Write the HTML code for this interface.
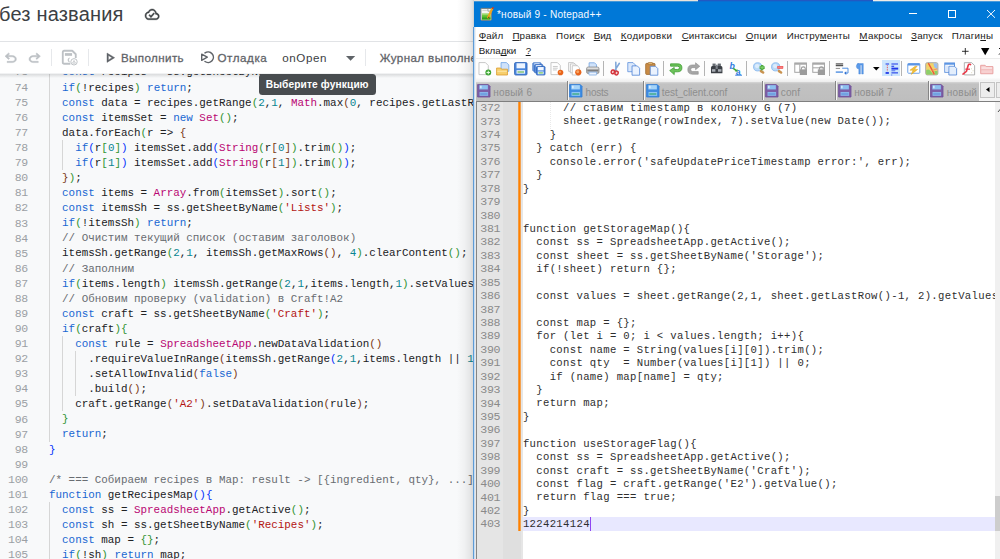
<!DOCTYPE html>
<html lang="ru"><head><meta charset="utf-8"><title>без названия</title>
<style>
html,body{margin:0;padding:0}
body{width:1000px;height:559px;overflow:hidden;position:relative;background:#fff;font-family:"Liberation Sans",sans-serif}
.t{position:absolute;white-space:pre}
.a{position:absolute}
svg{position:absolute;overflow:visible}
#gas{position:absolute;left:0;top:0;width:474px;height:559px;overflow:hidden;background:#fff}
#code{position:absolute;left:0;top:73.5px;width:474px;height:485.5px;background:#f8f9fa;overflow:hidden}
#code .ln{position:absolute;left:0;text-align:right;color:#9b9fa4;white-space:pre;font-family:"Liberation Mono",monospace}
#code .cl{position:absolute;white-space:pre;font-family:"Liberation Mono",monospace;color:#202124}
.k{color:#1967d2}.c{color:#b80672}.s{color:#b31412}.n{color:#098591}.m{color:#686c71}
.b1{color:#0431fa}.b2{color:#319331}.b3{color:#7b3814}
#npp{position:absolute;left:473px;top:0;width:527px;height:559px;overflow:hidden;background:#fff}
#npp .ln{position:absolute;white-space:pre;color:#8a8a8a;font-family:"Liberation Mono",monospace}
#npp .cl{position:absolute;white-space:pre;color:#2e2e2e;font-family:"Liberation Mono",monospace}
u{text-decoration-skip-ink:none;text-underline-offset:1px;text-decoration-thickness:1px}

</style></head>
<body>
<div id="gas">
<div class="t " style="left:-1.00px;top:0.77px;font-size:20px;line-height:26.0px;color:#3c4043;letter-spacing:0.189px;">без названия</div>
<svg style="left:144.50px;top:9.10px" width="14.30" height="10.73" viewBox="0 4 24 16" preserveAspectRatio="none"><path d="M19.35 10.04C18.67 6.59 15.64 4 12 4 9.11 4 6.6 5.64 5.35 8.04 2.34 8.36 0 10.91 0 14c0 3.31 2.69 6 6 6h13c2.76 0 5-2.24 5-5 0-2.64-2.05-4.78-4.65-4.96zM19 18H6c-2.21 0-4-1.79-4-4 0-2.05 1.53-3.76 3.56-3.97l1.07-.11.5-.95C8.08 7.14 9.94 6 12 6c2.62 0 4.88 1.86 5.39 4.43l.3 1.5 1.53.11c1.56.1 2.78 1.41 2.78 2.96 0 1.65-1.35 3-3 3zm-9-3.82l-2.09-2.09L6.5 13.5 10 17l6.01-6.01-1.41-1.41z" fill="#3c4043" stroke="#3c4043" stroke-width=".7"/></svg>
<div class="a" style="left:0;top:40.8px;width:474px;height:1px;background:#e1e3e6"></div>
<div class="a" style="left:0;top:73.4px;width:474px;height:2px;background:#f1f2f3"></div>
<div id="code" style="top:74.3px;height:484.7px">
<div class="a" style="left:49.30px;top:-24.86px;width:1px;height:392.08px;background:#d6d6d6"></div>
<div class="a" style="left:62.38px;top:65.62px;width:1px;height:30.16px;background:#d6d6d6"></div>
<div class="a" style="left:62.38px;top:261.66px;width:1px;height:75.40px;background:#d6d6d6"></div>
<div class="a" style="left:75.46px;top:276.74px;width:1px;height:45.24px;background:#d6d6d6"></div>
<div class="a" style="left:49.30px;top:427.54px;width:1px;height:90.48px;background:#d6d6d6"></div>
<div class="ln" style="top:-10.38px;width:27.7px;font-size:11.5px;line-height:15.08px;letter-spacing:-.38px">73</div>
<div class="cl" style="left:49.0px;top:-9.58px;font-size:10.9px;line-height:15.08px">  <span class="k">const</span> recipes = ss.getSheetByName<span class="b2">(</span><span class="s">'Recipes'</span><span class="b2">)</span>;</div>
<div class="ln" style="top:5.50px;width:27.7px;font-size:11.5px;line-height:15.08px;letter-spacing:-.38px">74</div>
<div class="cl" style="left:49.0px;top:6.30px;font-size:10.9px;line-height:15.08px">  <span class="k">if</span><span class="b2">(</span>!recipes<span class="b2">)</span> <span class="k">return</span>;</div>
<div class="ln" style="top:20.58px;width:27.7px;font-size:11.5px;line-height:15.08px;letter-spacing:-.38px">75</div>
<div class="cl" style="left:49.0px;top:21.38px;font-size:10.9px;line-height:15.08px">  <span class="k">const</span> data = recipes.getRange<span class="b2">(</span><span class="n">2</span>,<span class="n">1</span>, <span class="c">Math</span>.max<span class="b3">(</span><span class="n">0</span>, recipes.getLastR</div>
<div class="ln" style="top:35.66px;width:27.7px;font-size:11.5px;line-height:15.08px;letter-spacing:-.38px">76</div>
<div class="cl" style="left:49.0px;top:36.46px;font-size:10.9px;line-height:15.08px">  <span class="k">const</span> itemsSet = <span class="k">new</span> <span class="c">Set</span><span class="b2">(</span><span class="b2">)</span>;</div>
<div class="ln" style="top:50.74px;width:27.7px;font-size:11.5px;line-height:15.08px;letter-spacing:-.38px">77</div>
<div class="cl" style="left:49.0px;top:51.54px;font-size:10.9px;line-height:15.08px">  data.forEach<span class="b2">(</span>r =&gt; <span class="b3">{</span></div>
<div class="ln" style="top:65.82px;width:27.7px;font-size:11.5px;line-height:15.08px;letter-spacing:-.38px">78</div>
<div class="cl" style="left:49.0px;top:66.62px;font-size:10.9px;line-height:15.08px">    <span class="k">if</span><span class="b1">(</span>r<span class="b2">[</span><span class="n">0</span><span class="b2">]</span><span class="b1">)</span> itemsSet.add<span class="b1">(</span><span class="c">String</span><span class="b2">(</span>r<span class="b3">[</span><span class="n">0</span><span class="b3">]</span><span class="b2">)</span>.trim<span class="b2">(</span><span class="b2">)</span><span class="b1">)</span>;</div>
<div class="ln" style="top:80.90px;width:27.7px;font-size:11.5px;line-height:15.08px;letter-spacing:-.38px">79</div>
<div class="cl" style="left:49.0px;top:81.70px;font-size:10.9px;line-height:15.08px">    <span class="k">if</span><span class="b1">(</span>r<span class="b2">[</span><span class="n">1</span><span class="b2">]</span><span class="b1">)</span> itemsSet.add<span class="b1">(</span><span class="c">String</span><span class="b2">(</span>r<span class="b3">[</span><span class="n">1</span><span class="b3">]</span><span class="b2">)</span>.trim<span class="b2">(</span><span class="b2">)</span><span class="b1">)</span>;</div>
<div class="ln" style="top:95.98px;width:27.7px;font-size:11.5px;line-height:15.08px;letter-spacing:-.38px">80</div>
<div class="cl" style="left:49.0px;top:96.78px;font-size:10.9px;line-height:15.08px">  <span class="b3">}</span><span class="b2">)</span>;</div>
<div class="ln" style="top:111.06px;width:27.7px;font-size:11.5px;line-height:15.08px;letter-spacing:-.38px">81</div>
<div class="cl" style="left:49.0px;top:111.86px;font-size:10.9px;line-height:15.08px">  <span class="k">const</span> items = <span class="c">Array</span>.from<span class="b2">(</span>itemsSet<span class="b2">)</span>.sort<span class="b2">(</span><span class="b2">)</span>;</div>
<div class="ln" style="top:126.14px;width:27.7px;font-size:11.5px;line-height:15.08px;letter-spacing:-.38px">82</div>
<div class="cl" style="left:49.0px;top:126.94px;font-size:10.9px;line-height:15.08px">  <span class="k">const</span> itemsSh = ss.getSheetByName<span class="b2">(</span><span class="s">'Lists'</span><span class="b2">)</span>;</div>
<div class="ln" style="top:141.22px;width:27.7px;font-size:11.5px;line-height:15.08px;letter-spacing:-.38px">83</div>
<div class="cl" style="left:49.0px;top:142.02px;font-size:10.9px;line-height:15.08px">  <span class="k">if</span><span class="b2">(</span>!itemsSh<span class="b2">)</span> <span class="k">return</span>;</div>
<div class="ln" style="top:156.30px;width:27.7px;font-size:11.5px;line-height:15.08px;letter-spacing:-.38px">84</div>
<div class="cl" style="left:49.0px;top:157.10px;font-size:10.9px;line-height:15.08px">  <span class="m">// Очистим текущий список (оставим заголовок)</span></div>
<div class="ln" style="top:171.38px;width:27.7px;font-size:11.5px;line-height:15.08px;letter-spacing:-.38px">85</div>
<div class="cl" style="left:49.0px;top:172.18px;font-size:10.9px;line-height:15.08px">  itemsSh.getRange<span class="b2">(</span><span class="n">2</span>,<span class="n">1</span>, itemsSh.getMaxRows<span class="b3">(</span><span class="b3">)</span>, <span class="n">4</span><span class="b2">)</span>.clearContent<span class="b2">(</span><span class="b2">)</span>;</div>
<div class="ln" style="top:186.46px;width:27.7px;font-size:11.5px;line-height:15.08px;letter-spacing:-.38px">86</div>
<div class="cl" style="left:49.0px;top:187.26px;font-size:10.9px;line-height:15.08px">  <span class="m">// Заполним</span></div>
<div class="ln" style="top:201.54px;width:27.7px;font-size:11.5px;line-height:15.08px;letter-spacing:-.38px">87</div>
<div class="cl" style="left:49.0px;top:202.34px;font-size:10.9px;line-height:15.08px">  <span class="k">if</span><span class="b2">(</span>items.length<span class="b2">)</span> itemsSh.getRange<span class="b2">(</span><span class="n">2</span>,<span class="n">1</span>,items.length,<span class="n">1</span><span class="b2">)</span>.setValues</div>
<div class="ln" style="top:216.62px;width:27.7px;font-size:11.5px;line-height:15.08px;letter-spacing:-.38px">88</div>
<div class="cl" style="left:49.0px;top:217.42px;font-size:10.9px;line-height:15.08px">  <span class="m">// Обновим проверку (validation) в Craft!A2</span></div>
<div class="ln" style="top:231.70px;width:27.7px;font-size:11.5px;line-height:15.08px;letter-spacing:-.38px">89</div>
<div class="cl" style="left:49.0px;top:232.50px;font-size:10.9px;line-height:15.08px">  <span class="k">const</span> craft = ss.getSheetByName<span class="b2">(</span><span class="s">'Craft'</span><span class="b2">)</span>;</div>
<div class="ln" style="top:246.78px;width:27.7px;font-size:11.5px;line-height:15.08px;letter-spacing:-.38px">90</div>
<div class="cl" style="left:49.0px;top:247.58px;font-size:10.9px;line-height:15.08px">  <span class="k">if</span><span class="b2">(</span>craft<span class="b2">)</span><span class="b2">{</span></div>
<div class="ln" style="top:261.86px;width:27.7px;font-size:11.5px;line-height:15.08px;letter-spacing:-.38px">91</div>
<div class="cl" style="left:49.0px;top:262.66px;font-size:10.9px;line-height:15.08px">    <span class="k">const</span> rule = <span class="c">SpreadsheetApp</span>.newDataValidation<span class="b3">(</span><span class="b3">)</span></div>
<div class="ln" style="top:276.94px;width:27.7px;font-size:11.5px;line-height:15.08px;letter-spacing:-.38px">92</div>
<div class="cl" style="left:49.0px;top:277.74px;font-size:10.9px;line-height:15.08px">      .requireValueInRange<span class="b3">(</span>itemsSh.getRange<span class="b1">(</span><span class="n">2</span>,<span class="n">1</span>,items.length || <span class="n">1</span></div>
<div class="ln" style="top:292.02px;width:27.7px;font-size:11.5px;line-height:15.08px;letter-spacing:-.38px">93</div>
<div class="cl" style="left:49.0px;top:292.82px;font-size:10.9px;line-height:15.08px">      .setAllowInvalid<span class="b3">(</span><span class="k">false</span><span class="b3">)</span></div>
<div class="ln" style="top:307.10px;width:27.7px;font-size:11.5px;line-height:15.08px;letter-spacing:-.38px">94</div>
<div class="cl" style="left:49.0px;top:307.90px;font-size:10.9px;line-height:15.08px">      .build<span class="b3">(</span><span class="b3">)</span>;</div>
<div class="ln" style="top:322.18px;width:27.7px;font-size:11.5px;line-height:15.08px;letter-spacing:-.38px">95</div>
<div class="cl" style="left:49.0px;top:322.98px;font-size:10.9px;line-height:15.08px">    craft.getRange<span class="b3">(</span><span class="s">'A2'</span><span class="b3">)</span>.setDataValidation<span class="b3">(</span>rule<span class="b3">)</span>;</div>
<div class="ln" style="top:337.26px;width:27.7px;font-size:11.5px;line-height:15.08px;letter-spacing:-.38px">96</div>
<div class="cl" style="left:49.0px;top:338.06px;font-size:10.9px;line-height:15.08px">  <span class="b2">}</span></div>
<div class="ln" style="top:352.34px;width:27.7px;font-size:11.5px;line-height:15.08px;letter-spacing:-.38px">97</div>
<div class="cl" style="left:49.0px;top:353.14px;font-size:10.9px;line-height:15.08px">  <span class="k">return</span>;</div>
<div class="ln" style="top:367.42px;width:27.7px;font-size:11.5px;line-height:15.08px;letter-spacing:-.38px">98</div>
<div class="cl" style="left:49.0px;top:368.22px;font-size:10.9px;line-height:15.08px"><span class="b1">}</span></div>
<div class="ln" style="top:382.50px;width:27.7px;font-size:11.5px;line-height:15.08px;letter-spacing:-.38px">99</div>
<div class="ln" style="top:397.58px;width:27.7px;font-size:11.5px;line-height:15.08px;letter-spacing:-.38px">100</div>
<div class="cl" style="left:49.0px;top:398.38px;font-size:10.9px;line-height:15.08px"><span class="m">/* === Собираем recipes в Map: result -&gt; [{ingredient, qty}, ...]</span></div>
<div class="ln" style="top:412.66px;width:27.7px;font-size:11.5px;line-height:15.08px;letter-spacing:-.38px">101</div>
<div class="cl" style="left:49.0px;top:413.46px;font-size:10.9px;line-height:15.08px"><span class="k">function</span> getRecipesMap<span class="b1">(</span><span class="b1">)</span><span class="b1">{</span></div>
<div class="ln" style="top:427.74px;width:27.7px;font-size:11.5px;line-height:15.08px;letter-spacing:-.38px">102</div>
<div class="cl" style="left:49.0px;top:428.54px;font-size:10.9px;line-height:15.08px">  <span class="k">const</span> ss = <span class="c">SpreadsheetApp</span>.getActive<span class="b2">(</span><span class="b2">)</span>;</div>
<div class="ln" style="top:442.82px;width:27.7px;font-size:11.5px;line-height:15.08px;letter-spacing:-.38px">103</div>
<div class="cl" style="left:49.0px;top:443.62px;font-size:10.9px;line-height:15.08px">  <span class="k">const</span> sh = ss.getSheetByName<span class="b2">(</span><span class="s">'Recipes'</span><span class="b2">)</span>;</div>
<div class="ln" style="top:457.90px;width:27.7px;font-size:11.5px;line-height:15.08px;letter-spacing:-.38px">104</div>
<div class="cl" style="left:49.0px;top:458.70px;font-size:10.9px;line-height:15.08px">  <span class="k">const</span> map = <span class="b2">{</span><span class="b2">}</span>;</div>
<div class="ln" style="top:472.98px;width:27.7px;font-size:11.5px;line-height:15.08px;letter-spacing:-.38px">105</div>
<div class="cl" style="left:49.0px;top:473.78px;font-size:10.9px;line-height:15.08px">  <span class="k">if</span><span class="b2">(</span>!sh<span class="b2">)</span> <span class="k">return</span> map;</div>
<div class="a" style="left:0;top:0;width:474px;height:4px;background:linear-gradient(rgba(60,64,67,.16),rgba(60,64,67,0))"></div>
<div class="a" style="left:258.6px;top:0.0px;width:117.4px;height:20.5px;background:#484c4f;border-radius:3.5px"></div>
</div>
<div class="t " style="left:265.70px;top:78.13px;font-size:10.2px;line-height:13.26px;color:#fff;letter-spacing:0.130px;font-weight:bold;">Выберите функцию</div>
<svg style="left:5.40px;top:52.60px" width="11.40" height="9.60" viewBox="4 4 16 15" preserveAspectRatio="none"><path d="M7 19v-2h7.1q1.575 0 2.737-1Q18 15 18 13.5T16.838 11Q15.675 10 14.1 10H7.8l2.6 2.6L9 14 4 9l5-5 1.4 1.4L7.8 8h6.3q2.425 0 4.163 1.575Q20 11.15 20 13.5q0 2.35-1.737 3.925Q16.525 19 14.1 19Z" fill="#bcc0c4" stroke="#bcc0c4" stroke-width=".7"/></svg>
<svg style="left:28.80px;top:52.60px" width="11.40" height="9.60" viewBox="4 4 16 15" preserveAspectRatio="none"><path d="M9.9 19q-2.425 0-4.163-1.575Q4 15.850 4 13.5q0-2.35 1.737-3.925Q7.475 8 9.9 8h6.3l-2.6-2.6L15 4l5 5-5 5-1.4-1.4 2.6-2.6H9.9q-1.575 0-2.737 1Q6 12 6 13.5T7.163 16q1.162 1 2.737 1H17v2Z" fill="#bcc0c4" stroke="#bcc0c4" stroke-width=".7"/></svg>
<div class="a" style="left:51px;top:49px;width:1px;height:16.5px;background:#e6e8eb"></div>
<svg style="left:61.80px;top:50.00px" width="15.50" height="15.50" viewBox="0 0 16 16" ><path d="M2.2 0.8H10.6L14.2 4.4V8.2M8.6 14.2H2.2Q0.8 14.2 0.8 12.8V2.2Q0.8 0.8 2.2 0.8" fill="none" stroke="#bdc1c5" stroke-width="1.9" stroke-linejoin="round"/><rect x="3" y="3.2" width="7.4" height="2.8" fill="#bdc1c5"/><path d="M7.6 8.2A2.3 2.3 0 0 0 7.6 12.4A3 3 0 0 1 7.6 8.2Z" fill="#bdc1c5" stroke="#bdc1c5" stroke-width=".8"/><circle cx="12.4" cy="12.2" r="3.3" fill="#fff" stroke="#bdc1c5" stroke-width="1"/><path d="M10.9 13.6L12.4 10.8L13.9 13.6Z" fill="none" stroke="#bdc1c5" stroke-width=".8"/></svg>
<div class="a" style="left:87.6px;top:49px;width:1px;height:16.5px;background:#e6e8eb"></div>
<svg style="left:107.00px;top:53.00px" width="7.70" height="9.40" viewBox="8 5 11 14" preserveAspectRatio="none"><path d="M8 19V5l11 7Zm2-7Zm0 3.35L15.25 12 10 8.65Z" fill="#5f6368" stroke="#5f6368" stroke-width=".6"/></svg>
<div class="t " style="left:121.00px;top:50.44px;font-size:11.6px;line-height:15.08px;color:#5f6368;letter-spacing:0.385px;-webkit-text-stroke:.28px #5f6368;">Выполнить</div>
<svg style="left:200.70px;top:51.30px" width="12.40" height="12.40" viewBox="0 0 12.4 12.4" ><path d="M4.0 1.9A5.3 5.3 0 1 1 4.0 10.5" fill="none" stroke="#5f6368" stroke-width="1.5" stroke-linecap="round"/><path d="M0.7 3.1L6.3 6.2L0.7 9.3Z" fill="none" stroke="#5f6368" stroke-width="1.4" stroke-linejoin="round"/></svg>
<div class="t " style="left:217.50px;top:50.44px;font-size:11.6px;line-height:15.08px;color:#5f6368;letter-spacing:0.567px;-webkit-text-stroke:.28px #5f6368;">Отладка</div>
<div class="t " style="left:282.20px;top:50.44px;font-size:11.6px;line-height:15.08px;color:#3c4043;letter-spacing:0.622px;">onOpen</div>
<svg style="left:345.7px;top:55.6px" width="9.2" height="4.8" viewBox="0 0 10 5"><path d="M0 0H10L5 5Z" fill="#5f6368"/></svg>
<div class="a" style="left:365.4px;top:49px;width:1px;height:16.5px;background:#e6e8eb"></div>
<div class="t " style="left:379.80px;top:50.44px;font-size:11.6px;line-height:15.08px;color:#5f6368;letter-spacing:0.396px;-webkit-text-stroke:.28px #5f6368;">Журнал выполнения</div>
</div>
<div id="npp" style="left:0;width:1000px;background:none;pointer-events:none">
<div class="a" style="left:473.5px;top:1.3px;width:526.5px;height:558px;background:#fff"></div>
<div class="a" style="left:473.5px;top:1.3px;width:526.5px;height:25.4px;background:#0078d7"></div>
<div class="a" style="left:473.5px;top:0px;width:224.5px;height:1px;background:#e9e3db;opacity:1"></div>
<div class="a" style="left:698px;top:0px;width:174.5px;height:1px;background:#2259c2;opacity:1"></div>
<div class="a" style="left:872.5px;top:0px;width:127.5px;height:1px;background:#f0ece7;opacity:1"></div>
<div class="a" style="left:473.5px;top:1px;width:224.5px;height:1px;background:#e9e3db;opacity:0.3"></div>
<div class="a" style="left:698px;top:1px;width:174.5px;height:1px;background:#2259c2;opacity:0.3"></div>
<div class="a" style="left:872.5px;top:1px;width:127.5px;height:1px;background:#f0ece7;opacity:0.3"></div>
<svg style="left:479.60px;top:7.00px" width="13.80" height="13.80" viewBox="0 0 14 14" ><rect x=".9" y="1.4" width="10.6" height="12" rx=".5" fill="#f4f4f0" stroke="#7d7d78" stroke-width="1"/><path d="M2 12.6V6.4h8.6v6.2z" fill="#9ad86a"/><path d="M2 12.6V8.4h8.6v4.2z" fill="#5cc030"/><path d="M2 12.6V10.6h8.6v2z" fill="#2f9e1c"/><path d="M2.4 3.4h4.6" stroke="#c9c9c4" stroke-width=".9"/><path d="M8 1.6v2.6h3" fill="none" stroke="#8a8a84" stroke-width=".8"/><path d="M12.4 1.8L8.2 10.6" stroke="#f0a41c" stroke-width="2.2" stroke-linecap="round"/><path d="M8.6 9.6L7.6 12L9.6 10.6Z" fill="#6b4a1e"/><circle cx="13" cy="1" r="1" fill="#c0392b"/></svg>
<div class="t " style="left:497.00px;top:8.33px;font-size:10.1px;line-height:13.13px;color:#f4f9ff;letter-spacing:0.194px;">*новый 9 - Notepad++</div>
<div class="a" style="left:909px;top:13px;width:8.4px;height:1px;background:#fff"></div>
<div class="a" style="left:947.6px;top:10.2px;width:6.3px;height:5.8px;border:1px solid #fff;box-sizing:content-box"></div>
<svg style="left:987.2px;top:10.1px" width="8" height="7.8" viewBox="0 0 10 10" preserveAspectRatio="none"><path d="M0 0L10 10M10 0L0 10" stroke="#fff" stroke-width="1.2"/></svg>
<div class="t " style="left:478.70px;top:29.53px;font-size:9.8px;line-height:12.74px;color:#1a1a1a;letter-spacing:0.127px;"><u>Ф</u>айл</div>
<div class="t " style="left:512.40px;top:29.53px;font-size:9.8px;line-height:12.74px;color:#1a1a1a;letter-spacing:0.134px;"><u>П</u>равка</div>
<div class="t " style="left:556.10px;top:29.53px;font-size:9.8px;line-height:12.74px;color:#1a1a1a;letter-spacing:0.349px;">Пои<u>с</u>к</div>
<div class="t " style="left:593.70px;top:29.53px;font-size:9.8px;line-height:12.74px;color:#1a1a1a;letter-spacing:-0.045px;"><u>В</u>ид</div>
<div class="t " style="left:620.70px;top:29.53px;font-size:9.8px;line-height:12.74px;color:#1a1a1a;letter-spacing:0.400px;"><u>К</u>одировки</div>
<div class="t " style="left:681.70px;top:29.53px;font-size:9.8px;line-height:12.74px;color:#1a1a1a;letter-spacing:0.080px;"><u>С</u>интаксисы</div>
<div class="t " style="left:745.70px;top:29.53px;font-size:9.8px;line-height:12.74px;color:#1a1a1a;letter-spacing:0.423px;"><u>О</u>пции</div>
<div class="t " style="left:786.70px;top:29.53px;font-size:9.8px;line-height:12.74px;color:#1a1a1a;letter-spacing:0.191px;">Инстру<u>м</u>енты</div>
<div class="t " style="left:859.30px;top:29.53px;font-size:9.8px;line-height:12.74px;color:#1a1a1a;letter-spacing:0.308px;"><u>М</u>акросы</div>
<div class="t " style="left:911.10px;top:29.53px;font-size:9.8px;line-height:12.74px;color:#1a1a1a;letter-spacing:0.174px;"><u>З</u>апуск</div>
<div class="t " style="left:951.70px;top:29.53px;font-size:9.8px;line-height:12.74px;color:#1a1a1a;letter-spacing:0.269px;">Плаги<u>н</u>ы</div>
<div class="t " style="left:478.70px;top:45.23px;font-size:9.8px;line-height:12.74px;color:#1a1a1a;letter-spacing:0.003px;">Вкла<u>д</u>ки</div>
<div class="t " style="left:525.70px;top:45.23px;font-size:9.8px;line-height:12.74px;color:#1a1a1a;letter-spacing:-0.453px;"><u>?</u></div>
<svg style="left:962.3px;top:48px" width="6.6" height="6.6" viewBox="0 0 10 10"><path d="M5 0V10M0 5H10" stroke="#111" stroke-width="1.3"/></svg>
<svg style="left:980.6px;top:47.6px" width="8.4" height="7.2" viewBox="0 0 10 10" preserveAspectRatio="none"><path d="M0 0H10L5 10Z" fill="#000"/></svg>
<svg style="left:998.8px;top:48px" width="6.6" height="6.6" viewBox="0 0 10 10"><path d="M0 0L10 10M10 0L0 10" stroke="#111" stroke-width="1.5"/></svg>
<div class="a" style="left:474.5px;top:58.4px;width:526px;height:1px;background:#ececec"></div>
<div class="a" style="left:474.5px;top:59.4px;width:526px;height:19.4px;background:#fdfdfd"></div>
<div class="a" style="left:474.5px;top:78.4px;width:526px;height:3.8px;background:linear-gradient(#fbfbfb,#ececec)"></div>
<div class="a" style="left:882px;top:59.6px;width:18.2px;height:16.6px;background:#cde6fd;border:0"></div>
<svg style="left:478.00px;top:61.70px" width="13.60" height="13.60" viewBox="0 0 14 14" ><path d="M1 0.6h6.6l3 3v9.4h-9.6z" fill="#fff" stroke="#b9b9b9" stroke-width="0.8" stroke-linejoin="round"/><circle cx="10.6" cy="10.8" r="3" fill="#3fa535"/><path d="M10.6 9v3.6M8.8 10.8h3.6" stroke="#e6ffe0" stroke-width="1"/></svg>
<svg style="left:495.50px;top:61.70px" width="13.60" height="13.60" viewBox="0 0 14 14" ><path d="M5.2 0.6h5.6l2.4 2.4v6.6h-8z" fill="#cfe2fa" stroke="#6aa0e4" stroke-width="0.8" stroke-linejoin="round"/><path d="M.6 6.2h4.2l1 1.2h6v6H.6z" fill="#f7cf6d" stroke="#d99a2b" stroke-width=".8" stroke-linejoin="round"/><path d="M1.4 9h9.8v1.2H1.4z" fill="#fbe3a0"/></svg>
<svg style="left:513.60px;top:61.70px" width="13.60" height="13.60" viewBox="0 0 14 14" ><rect x=".6" y=".6" width="12.8" height="12.8" rx="1.2" fill="#4a86dc" stroke="#2f64b8" stroke-width=".9"/><rect x="2.6" y="1.3" width="8.8" height="5.2" fill="#eef5ff"/><rect x="2.6" y="8.4" width="8.8" height="3.6" fill="#eef5ff"/><rect x="3.6" y="9.5" width="6.8" height="1.6" fill="#86c57a"/></svg>
<svg style="left:531.80px;top:61.70px" width="13.60" height="13.60" viewBox="0 0 14 14" ><rect x=".8" y=".8" width="8.6" height="8.6" rx=".8" fill="#6f9fe2" stroke="#3f72c4" stroke-width=".8"/><rect x="2.4" y="1.4" width="5.4" height="2.4" fill="#eef5ff"/><rect x="2.6" y="2.6" width="8.6" height="8.6" rx=".8" fill="#5f93dc" stroke="#3a6cc0" stroke-width=".8"/><rect x="4.2" y="3.2" width="5.4" height="2.4" fill="#eef5ff"/><rect x="4.6" y="4.6" width="8.8" height="8.8" rx=".8" fill="#4a86dc" stroke="#2f64b8" stroke-width=".8"/><rect x="6" y="5.2" width="6" height="3.4" fill="#f2f7ff"/><rect x="6" y="9.8" width="6" height="2.8" fill="#eef5ff"/><rect x="6.8" y="10.4" width="4.4" height="1.6" fill="#8fd07e"/></svg>
<svg style="left:549.80px;top:61.70px" width="13.60" height="13.60" viewBox="0 0 14 14" ><path d="M1 0.6h6.6l3 3v9.4h-9.6z" fill="#fff" stroke="#b9b9b9" stroke-width="0.8" stroke-linejoin="round"/><path d="M3 4.6h5M3 6.4h5M3 8.2h4" stroke="#c8c8c8" stroke-width="1"/><circle cx="10.8" cy="10.8" r="2.9" fill="#e8641b"/><circle cx="10.3" cy="10.2" r="1.2" fill="#f59a55"/></svg>
<svg style="left:568.20px;top:61.70px" width="13.60" height="13.60" viewBox="0 0 14 14" ><path d="M0.6 0.6h5.0l2.2 2.2v6.8h-7.2z" fill="#fff" stroke="#b9b9b9" stroke-width="0.8" stroke-linejoin="round"/><path d="M2.4 2h5.0l2.2 2.2v6.999999999999999h-7.2z" fill="#fff" stroke="#b9b9b9" stroke-width="0.8" stroke-linejoin="round"/><path d="M4.4 3.8h5.2l2.2 2.2v7.3999999999999995h-7.4z" fill="#fff" stroke="#b9b9b9" stroke-width="0.8" stroke-linejoin="round"/><circle cx="10.6" cy="10.6" r="3.2" fill="#e8641b"/><circle cx="10" cy="10" r="1.5" fill="#f6a565"/></svg>
<svg style="left:586.20px;top:61.70px" width="13.60" height="13.60" viewBox="0 0 14 14" ><path d="M3.2 6V.8h5.6l2 2V6z" fill="#cfe2fa" stroke="#6fa0e0" stroke-width=".8"/><rect x=".6" y="5.2" width="12.8" height="6.6" rx="1.6" fill="#b9b9b9" stroke="#858585" stroke-width=".8"/><path d="M1.4 6.4h11.2" stroke="#e6e6e6" stroke-width="1.2"/><rect x="1.4" y="8" width="11.2" height="1.6" fill="#7d7d7d"/><path d="M3 10.4h8v2.4q0 .6-.6.6H3.6q-.6 0-.6-.6z" fill="#eaf2fd" stroke="#7aa7e0" stroke-width=".8"/></svg>
<svg style="left:609.20px;top:61.70px" width="13.60" height="13.60" viewBox="0 0 14 14" ><g transform="rotate(14 7 7)"><path d="M5.4 .6L7.6 8.6M9.2 .6L6.6 8.6" stroke="#7fa6d8" stroke-width="1.6" stroke-linecap="round"/><ellipse cx="4.8" cy="10.8" rx="1.7" ry="2" fill="#f3d0d0" stroke="#d4333a" stroke-width="1.5"/><ellipse cx="8.8" cy="11" rx="1.7" ry="2" fill="#f3d0d0" stroke="#d4333a" stroke-width="1.5"/></g></svg>
<svg style="left:627.20px;top:61.70px" width="13.60" height="13.60" viewBox="0 0 14 14" ><path d="M0.8 0.6h5.4l2.4 2.4v7.0h-7.8z" fill="#dbe8fb" stroke="#5b8fdb" stroke-width="0.8" stroke-linejoin="round"/><path d="M5.2 4h5.4l2.4 2.4v7.199999999999999h-7.8z" fill="#eaf2fe" stroke="#4a80d4" stroke-width="0.8" stroke-linejoin="round"/></svg>
<svg style="left:645.30px;top:61.70px" width="13.60" height="13.60" viewBox="0 0 14 14" ><rect x=".7" y="1.4" width="9.6" height="11.4" rx="1" fill="#c98b45" stroke="#9c6a2e" stroke-width=".8"/><rect x="3.2" y=".5" width="4.6" height="2.2" rx=".6" fill="#e1b36f" stroke="#9c6a2e" stroke-width=".6"/><path d="M5.4 4.4h5.4l2.4 2.4v6.799999999999999h-7.8z" fill="#eaf2fe" stroke="#4a80d4" stroke-width="0.8" stroke-linejoin="round"/></svg>
<svg style="left:669.00px;top:61.70px" width="13.60" height="13.60" viewBox="0 0 14 14" ><path d="M1.6 1.9H9Q13.3 1.9 13.3 6T9 10.1H5.4V13L.7 8.8L5.4 5.6V7.7H8.8Q10.8 7.7 10.8 6T8.8 4.3H1.6Z" fill="#6cc35a" stroke="#3c9a30" stroke-width=".8" stroke-linejoin="round"/></svg>
<svg style="left:687.00px;top:61.70px" width="13.60" height="13.60" viewBox="0 0 14 14" ><path d="M8.8 .8L13.2 4.4L8.8 8V5.8H5.8Q3.8 5.8 3.8 7.8T5.8 9.8H11.6V12.6H5.6Q.8 12.4 .8 7.8T5.6 3H8.8Z" fill="#a6a6a6" stroke="#8e8e8e" stroke-width=".6" stroke-linejoin="round"/></svg>
<svg style="left:710.20px;top:61.70px" width="13.60" height="13.60" viewBox="0 0 14 14" ><rect x="2.6" y="1.6" width="3.2" height="3.4" fill="#666b72"/><rect x="8" y="1.6" width="3.2" height="3.4" fill="#666b72"/><path d="M1 5.8Q1 4.2 2.4 4.2H11.4Q12.8 4.2 12.8 5.8V11.6H1Z" fill="#3b3f45"/><rect x="5.8" y="2.8" width="2.2" height="4.4" fill="#7b8088"/><rect x="2" y="7.4" width="3.6" height="2.6" fill="#a9aeb6"/><rect x="8.2" y="7.4" width="3.6" height="2.6" fill="#a9aeb6"/></svg>
<svg style="left:728.80px;top:61.70px" width="13.60" height="13.60" viewBox="0 0 14 14" ><text x=".4" y="6.8" font-family="Liberation Sans,sans-serif" font-size="9" font-weight="bold" font-style="italic" fill="#2f7be0">b</text><text x="7" y="13.4" font-family="Liberation Sans,sans-serif" font-size="9" font-weight="bold" fill="#2f7be0">a</text><path d="M4.4 6.6L7.6 9" stroke="#3fa535" stroke-width="1.6"/><path d="M8.6 7.2L8.8 10L6 9.6Z" fill="#3fa535"/><path d="M6.4 13.6h7" stroke="#2f7be0" stroke-width="1"/></svg>
<svg style="left:752.60px;top:61.70px" width="13.60" height="13.60" viewBox="0 0 14 14" ><circle cx="4.8" cy="5" r="4.2" fill="#b9d9f8" stroke="#8dbbee" stroke-width="1"/><circle cx="4.2" cy="4.2" r="2.2" fill="#dcecfc"/><path d="M8.2 9.4L10.4 10.8" stroke="#c9924f" stroke-width="2.6" stroke-linecap="round"/><path d="M9.4 3.2v5.2M6.8 5.8h5.2" stroke="#4aa63a" stroke-width="2.6"/><path d="M9.4 4v3.6M7.6 5.8h3.6" stroke="#7fcf6a" stroke-width="1"/></svg>
<svg style="left:770.60px;top:61.70px" width="13.60" height="13.60" viewBox="0 0 14 14" ><circle cx="4.8" cy="5" r="4.2" fill="#b9d9f8" stroke="#8dbbee" stroke-width="1"/><circle cx="4.2" cy="4.2" r="2.2" fill="#dcecfc"/><path d="M8.2 9.4L10.4 10.8" stroke="#c9924f" stroke-width="2.6" stroke-linecap="round"/><rect x="6.4" y="4.2" width="6.2" height="2.8" rx=".5" fill="#f04a4a"/><rect x="7" y="4.8" width="5" height="1" fill="#f8a0a0"/></svg>
<svg style="left:793.50px;top:61.70px" width="13.60" height="13.60" viewBox="0 0 14 14" ><rect x=".8" y="1" width="12" height="9.6" fill="#fff" stroke="#a0a0a0" stroke-width="1"/><rect x=".8" y="1" width="12" height="1.8" fill="#a8a8a8"/><path d="M6 2.6v8" stroke="#a0a0a0" stroke-width="1"/><path d="M7.6 8V6.6Q7.6 5 9.6 5T11.6 6.6V8" fill="none" stroke="#9a9a9a" stroke-width="1.1"/><rect x="6" y="7.6" width="7.4" height="5.8" fill="#9c9c9c"/></svg>
<svg style="left:811.60px;top:61.70px" width="13.60" height="13.60" viewBox="0 0 14 14" ><rect x=".8" y="1" width="12" height="9.6" fill="#fff" stroke="#a0a0a0" stroke-width="1"/><rect x=".8" y="1" width="12" height="1.8" fill="#a8a8a8"/><path d="M1 6h11.6" stroke="#a0a0a0" stroke-width="1"/><path d="M7.6 8V6.6Q7.6 5 9.6 5T11.6 6.6V8" fill="none" stroke="#9a9a9a" stroke-width="1.1"/><rect x="6" y="7.6" width="7.4" height="5.8" fill="#9c9c9c"/></svg>
<svg style="left:835.00px;top:61.70px" width="13.60" height="13.60" viewBox="0 0 14 14" ><path d="M.8 2h7.6M.8 3.8h7.6" stroke="#222" stroke-width="1"/><path d="M.8 6.6h4.4" stroke="#888" stroke-width="1"/><path d="M7.4 6.4h6v5h-2.4" fill="none" stroke="#4a8be0" stroke-width="1"/><path d="M.8 10.4h7.4" stroke="#4a8be0" stroke-width="1.4"/><path d="M11.6 9.4v4L9.4 11.4z" fill="#2f6fd0"/></svg>
<svg style="left:853.40px;top:61.70px" width="13.60" height="13.60" viewBox="0 0 14 14" ><path d="M4.4 1.6H10.6V12.4H9V3H7.6V12.4H6V7.2Q3.4 7 3.4 4.4T6 1.6Z" fill="#5b9bea" stroke="#3f7fd6" stroke-width=".4"/></svg>
<svg style="left:906.80px;top:61.70px" width="13.60" height="13.60" viewBox="0 0 14 14" ><rect x=".8" y="1.6" width="12.4" height="10" rx=".8" fill="#fff" stroke="#6aa0e8" stroke-width="1"/><rect x=".8" y="1.6" width="12.4" height="2" fill="#5b95e4"/><path d="M8.4 4.4L3 8.4H6.2L4.4 12.8L11 7.6H7.6L10.4 4.4Z" fill="#f4c13a" stroke="#d9a21e" stroke-width=".5"/></svg>
<svg style="left:925.40px;top:61.70px" width="13.60" height="13.60" viewBox="0 0 14 14" ><rect x=".7" y=".7" width="12.6" height="12.6" rx="1.6" fill="#f2d36a" stroke="#a9a9a9" stroke-width="1"/><path d="M1.2 8.6Q4 6.6 6 9.6T9 12.8H1.2Z" fill="#8ccf6a"/><path d="M8.6 1.2h4.2v6.4L9.6 5.4Z" fill="#9bbff0"/><path d="M9.6 9.2h3.2v3.6H10.2Z" fill="#8ccf6a"/><path d="M3.4 1.2L7.4 8.4L9.6 12.8" stroke="#ec5a3a" stroke-width="1.4" fill="none"/><path d="M7.6 8.6L12.6 7" stroke="#f08a6a" stroke-width="1" fill="none"/></svg>
<svg style="left:943.60px;top:61.70px" width="13.60" height="13.60" viewBox="0 0 14 14" ><rect x=".8" y="1" width="10" height="9.6" fill="#fff" stroke="#5b8fdb" stroke-width="1"/><rect x=".8" y="1" width="10" height="1.8" fill="#5b95e4"/><rect x="1.6" y="3.6" width="2.6" height="6.2" fill="#dbe8fb"/><path d="M5 4.4h5.8l2.2 2.2v6.8h-8z" fill="#e3eefc" stroke="#4a80d4" stroke-width="0.8" stroke-linejoin="round"/></svg>
<svg style="left:961.80px;top:61.70px" width="13.60" height="13.60" viewBox="0 0 14 14" ><path d="M2.4 0.7h7.6l3 3v9.6h-10.6z" fill="#fff" stroke="#9a9a9a" stroke-width="0.8" stroke-linejoin="round"/><path d="M1 12.4L4.6 9.6L6.4 3.4Q7 1.8 8.8 2.6" fill="none" stroke="#e83a4a" stroke-width="1.7" stroke-linecap="round"/><path d="M3.4 7.4h4.8" stroke="#e83a4a" stroke-width="1.3"/><path d="M9.4 7h.8M11 9h.8M9.6 11h.8" stroke="#c8c29a" stroke-width=".8"/></svg>
<svg style="left:980.00px;top:61.70px" width="13.60" height="13.60" viewBox="0 0 14 14" ><path d="M.7 3.4h4.6l1 1.3h7v7.4H.7z" fill="#f7d0d0" stroke="#e79a9a" stroke-width=".9" stroke-linejoin="round"/><path d="M1.6 6.2h10.8" stroke="#fbe9e9" stroke-width="1.2"/><path d="M1.2 8h11.6" stroke="#eeb0b0" stroke-width=".7"/></svg>
<svg style="left:885.40px;top:61.70px" width="13.60" height="13.60" viewBox="0 0 14 14" ><path d="M.6 2h3.6M6.6 2h6.8" stroke="#1c36e8" stroke-width="1.1"/><path d="M6.6 4.4h2.8" stroke="#1c36e8" stroke-width="1.1"/><rect x="6.6" y="5.8" width="7" height="2" fill="#1c36e8"/><path d="M6.6 9h4" stroke="#5a7af0" stroke-width="1.1"/><rect x=".6" y="10.4" width="3.4" height="1.8" fill="#1c36e8"/><path d="M6.6 11.2h6.8" stroke="#1c36e8" stroke-width="1.1"/><path d="M6.6 13.4h.8" stroke="#1c36e8" stroke-width="1"/><path d="M2.4 3.4v6" stroke="#f03a3a" stroke-width=".9" stroke-dasharray="1 .8"/></svg>
<svg style="left:872.6px;top:66.6px" width="6.6" height="3.6" viewBox="0 0 10 5" preserveAspectRatio="none"><path d="M0 0H10L5 5Z" fill="#000"/></svg>
<div class="a" style="left:602.8px;top:61px;width:1.2px;height:14.6px;background:#b4b4b4"></div>
<div class="a" style="left:662.7px;top:61px;width:1.2px;height:14.6px;background:#b4b4b4"></div>
<div class="a" style="left:704.0px;top:61px;width:1.2px;height:14.6px;background:#b4b4b4"></div>
<div class="a" style="left:745.7px;top:61px;width:1.2px;height:14.6px;background:#b4b4b4"></div>
<div class="a" style="left:787.1px;top:61px;width:1.2px;height:14.6px;background:#b4b4b4"></div>
<div class="a" style="left:828.7px;top:61px;width:1.2px;height:14.6px;background:#b4b4b4"></div>
<div class="a" style="left:900.8px;top:61px;width:1.2px;height:14.6px;background:#b4b4b4"></div>
<div class="a" style="left:476px;top:82.1px;width:524px;height:18.7px;background:linear-gradient(#d6d6d6 0,#c2c2c2 2px,#bebebe 100%)"></div>
<div class="a" style="left:979px;top:80.5px;width:21px;height:20.2px;background:#f4f4f4"></div>
<svg style="left:477.00px;top:84.30px" width="13.60" height="13.60" viewBox="0 0 14 14" ><path d="M.6 .6H11.6L13.4 2.4V13.4H.6Z" fill="#7d5ea6" stroke="#6b4d96" stroke-width=".8" stroke-linejoin="round"/><rect x="2.4" y="1.2" width="8.8" height="4.4" fill="#8cc0f0"/><rect x="3.4" y="1.8" width="1.2" height="2.6" fill="#eef6ff"/><rect x="2.6" y="8.2" width="8.8" height="4" fill="#8ab6ea"/><rect x="3.4" y="9.4" width="7.2" height="1.8" fill="#6f9fe0"/></svg>
<div class="t " style="left:493.20px;top:85.63px;font-size:10.0px;line-height:13.0px;color:#8e8e8e;letter-spacing:0.212px;">новый 6</div>
<svg style="left:569.40px;top:84.30px" width="13.60" height="13.60" viewBox="0 0 14 14" ><path d="M.6 .6H11.6L13.4 2.4V13.4H.6Z" fill="#3f8ce2" stroke="#2f7cd6" stroke-width=".8" stroke-linejoin="round"/><rect x="2.4" y="1.2" width="8.8" height="4.4" fill="#a6d4f8"/><rect x="3.4" y="1.8" width="1.2" height="2.6" fill="#eef6ff"/><rect x="2.6" y="8.2" width="8.8" height="4" fill="#8fc6f2"/><rect x="3.4" y="9.4" width="7.2" height="1.8" fill="#4fb09a"/></svg>
<div class="t " style="left:585.60px;top:85.63px;font-size:10.0px;line-height:13.0px;color:#8e8e8e;letter-spacing:-0.261px;">hosts</div>
<svg style="left:645.60px;top:84.30px" width="13.60" height="13.60" viewBox="0 0 14 14" ><path d="M.6 .6H11.6L13.4 2.4V13.4H.6Z" fill="#3f8ce2" stroke="#2f7cd6" stroke-width=".8" stroke-linejoin="round"/><rect x="2.4" y="1.2" width="8.8" height="4.4" fill="#a6d4f8"/><rect x="3.4" y="1.8" width="1.2" height="2.6" fill="#eef6ff"/><rect x="2.6" y="8.2" width="8.8" height="4" fill="#8fc6f2"/><rect x="3.4" y="9.4" width="7.2" height="1.8" fill="#4fb09a"/></svg>
<div class="t " style="left:661.80px;top:85.63px;font-size:10.0px;line-height:13.0px;color:#8e8e8e;letter-spacing:-0.082px;">test_client.conf</div>
<svg style="left:765.00px;top:84.30px" width="13.60" height="13.60" viewBox="0 0 14 14" ><path d="M.6 .6H11.6L13.4 2.4V13.4H.6Z" fill="#7d5ea6" stroke="#6b4d96" stroke-width=".8" stroke-linejoin="round"/><rect x="2.4" y="1.2" width="8.8" height="4.4" fill="#8cc0f0"/><rect x="3.4" y="1.8" width="1.2" height="2.6" fill="#eef6ff"/><rect x="2.6" y="8.2" width="8.8" height="4" fill="#8ab6ea"/><rect x="3.4" y="9.4" width="7.2" height="1.8" fill="#6f9fe0"/></svg>
<div class="t " style="left:780.80px;top:85.63px;font-size:10.0px;line-height:13.0px;color:#8e8e8e;letter-spacing:0.123px;">conf</div>
<svg style="left:838.00px;top:84.30px" width="13.60" height="13.60" viewBox="0 0 14 14" ><path d="M.6 .6H11.6L13.4 2.4V13.4H.6Z" fill="#7d5ea6" stroke="#6b4d96" stroke-width=".8" stroke-linejoin="round"/><rect x="2.4" y="1.2" width="8.8" height="4.4" fill="#8cc0f0"/><rect x="3.4" y="1.8" width="1.2" height="2.6" fill="#eef6ff"/><rect x="2.6" y="8.2" width="8.8" height="4" fill="#8ab6ea"/><rect x="3.4" y="9.4" width="7.2" height="1.8" fill="#6f9fe0"/></svg>
<div class="t " style="left:854.20px;top:85.63px;font-size:10.0px;line-height:13.0px;color:#8e8e8e;letter-spacing:0.126px;">новый 7</div>
<svg style="left:930.40px;top:84.30px" width="13.60" height="13.60" viewBox="0 0 14 14" ><path d="M.6 .6H11.6L13.4 2.4V13.4H.6Z" fill="#7d5ea6" stroke="#6b4d96" stroke-width=".8" stroke-linejoin="round"/><rect x="2.4" y="1.2" width="8.8" height="4.4" fill="#8cc0f0"/><rect x="3.4" y="1.8" width="1.2" height="2.6" fill="#eef6ff"/><rect x="2.6" y="8.2" width="8.8" height="4" fill="#8ab6ea"/><rect x="3.4" y="9.4" width="7.2" height="1.8" fill="#6f9fe0"/></svg>
<div class="t " style="left:946.80px;top:85.63px;font-size:10.0px;line-height:13.0px;color:#8e8e8e;letter-spacing:0.246px;">новый</div>
<div class="a" style="left:567.0px;top:80.8px;width:1px;height:18.8px;background:#858585"></div>
<div class="a" style="left:568.0px;top:80.8px;width:1px;height:18.8px;background:#f6f6f6"></div>
<div class="a" style="left:643.0px;top:80.8px;width:1px;height:18.8px;background:#858585"></div>
<div class="a" style="left:644.0px;top:80.8px;width:1px;height:18.8px;background:#f6f6f6"></div>
<div class="a" style="left:762.2px;top:80.8px;width:1px;height:18.8px;background:#858585"></div>
<div class="a" style="left:763.2px;top:80.8px;width:1px;height:18.8px;background:#f6f6f6"></div>
<div class="a" style="left:835.1px;top:80.8px;width:1px;height:18.8px;background:#858585"></div>
<div class="a" style="left:836.1px;top:80.8px;width:1px;height:18.8px;background:#f6f6f6"></div>
<div class="a" style="left:928.0px;top:80.8px;width:1px;height:18.8px;background:#858585"></div>
<div class="a" style="left:929.0px;top:80.8px;width:1px;height:18.8px;background:#f6f6f6"></div>
<div class="a" style="left:980.3px;top:82.3px;width:14.7px;height:15.3px;background:#ededed;border:1px solid #c4c4c4;box-sizing:border-box"></div>
<div class="a" style="left:995.8px;top:82.3px;width:14.7px;height:15.3px;background:#ededed;border:1px solid #c4c4c4;box-sizing:border-box"></div>
<svg style="left:985.7px;top:87.1px" width="3.5" height="5.2" viewBox="0 0 5 8" preserveAspectRatio="none"><path d="M5 0V8L0 4Z" fill="#000"/></svg>
<div class="a" style="left:474.5px;top:100.6px;width:526px;height:1.4px;background:#7f7f7f"></div>
<div class="a" style="left:476px;top:101.0px;width:1px;height:458.0px;background:#858585"></div>
<div class="a" style="left:477px;top:102.0px;width:46px;height:457.0px;background:#dfdfdf"></div>
<div class="a" style="left:477px;top:102.0px;width:26px;height:457.0px;background:#e5e5e5"></div>
<div class="a" style="left:518px;top:102.0px;width:3px;height:429.0px;background:linear-gradient(90deg,#f59a3c 0,#f59a3c 1px,#ff8000 1px,#ff8000 2px,#f3a352 2px)"></div>
<div class="a" style="left:520.6px;top:102.0px;width:2.4px;height:457.0px;background:#e6e6e6"></div>
<div class="a" style="left:523px;top:517px;width:471.6px;height:13.6px;background:#e8e8ff"></div>
<div class="a" style="left:550.30px;top:102.46px;width:0;height:26.86px;border-left:1px dotted #e9e9e9"></div>
<div class="ln" style="left:480.20000000000005px;top:101.16px;font-size:11.6px;line-height:13.43px;letter-spacing:-0.261px">372</div>
<div class="cl" style="left:522.9px;top:101.96px;font-size:10.6px;line-height:13.43px;letter-spacing:0.339px">      // ставим timestamp в колонку G (7)</div>
<div class="ln" style="left:480.20000000000005px;top:114.59px;font-size:11.6px;line-height:13.43px;letter-spacing:-0.261px">373</div>
<div class="cl" style="left:522.9px;top:115.39px;font-size:10.6px;line-height:13.43px;letter-spacing:0.339px">      sheet.getRange(rowIndex, 7).setValue(new Date());</div>
<div class="ln" style="left:480.20000000000005px;top:128.02px;font-size:11.6px;line-height:13.43px;letter-spacing:-0.261px">374</div>
<div class="cl" style="left:522.9px;top:128.82px;font-size:10.6px;line-height:13.43px;letter-spacing:0.339px">    }</div>
<div class="ln" style="left:480.20000000000005px;top:141.45px;font-size:11.6px;line-height:13.43px;letter-spacing:-0.261px">375</div>
<div class="cl" style="left:522.9px;top:142.25px;font-size:10.6px;line-height:13.43px;letter-spacing:0.339px">  } catch (err) {</div>
<div class="ln" style="left:480.20000000000005px;top:154.88px;font-size:11.6px;line-height:13.43px;letter-spacing:-0.261px">376</div>
<div class="cl" style="left:522.9px;top:155.68px;font-size:10.6px;line-height:13.43px;letter-spacing:0.339px">    console.error('safeUpdatePriceTimestamp error:', err);</div>
<div class="ln" style="left:480.20000000000005px;top:168.31px;font-size:11.6px;line-height:13.43px;letter-spacing:-0.261px">377</div>
<div class="cl" style="left:522.9px;top:169.11px;font-size:10.6px;line-height:13.43px;letter-spacing:0.339px">  }</div>
<div class="ln" style="left:480.20000000000005px;top:181.74px;font-size:11.6px;line-height:13.43px;letter-spacing:-0.261px">378</div>
<div class="cl" style="left:522.9px;top:182.54px;font-size:10.6px;line-height:13.43px;letter-spacing:0.339px">}</div>
<div class="ln" style="left:480.20000000000005px;top:195.17px;font-size:11.6px;line-height:13.43px;letter-spacing:-0.261px">379</div>
<div class="ln" style="left:480.20000000000005px;top:208.60px;font-size:11.6px;line-height:13.43px;letter-spacing:-0.261px">380</div>
<div class="ln" style="left:480.20000000000005px;top:222.03px;font-size:11.6px;line-height:13.43px;letter-spacing:-0.261px">381</div>
<div class="cl" style="left:522.9px;top:222.83px;font-size:10.6px;line-height:13.43px;letter-spacing:0.339px">function getStorageMap(){</div>
<div class="ln" style="left:480.20000000000005px;top:235.46px;font-size:11.6px;line-height:13.43px;letter-spacing:-0.261px">382</div>
<div class="cl" style="left:522.9px;top:236.26px;font-size:10.6px;line-height:13.43px;letter-spacing:0.339px">  const ss = SpreadsheetApp.getActive();</div>
<div class="ln" style="left:480.20000000000005px;top:248.89px;font-size:11.6px;line-height:13.43px;letter-spacing:-0.261px">383</div>
<div class="cl" style="left:522.9px;top:249.69px;font-size:10.6px;line-height:13.43px;letter-spacing:0.339px">  const sheet = ss.getSheetByName('Storage');</div>
<div class="ln" style="left:480.20000000000005px;top:262.32px;font-size:11.6px;line-height:13.43px;letter-spacing:-0.261px">384</div>
<div class="cl" style="left:522.9px;top:263.12px;font-size:10.6px;line-height:13.43px;letter-spacing:0.339px">  if(!sheet) return {};</div>
<div class="ln" style="left:480.20000000000005px;top:275.75px;font-size:11.6px;line-height:13.43px;letter-spacing:-0.261px">385</div>
<div class="ln" style="left:480.20000000000005px;top:289.18px;font-size:11.6px;line-height:13.43px;letter-spacing:-0.261px">386</div>
<div class="cl" style="left:522.9px;top:289.98px;font-size:10.6px;line-height:13.43px;letter-spacing:0.339px">  const values = sheet.getRange(2,1, sheet.getLastRow()-1, 2).getValues</div>
<div class="ln" style="left:480.20000000000005px;top:302.61px;font-size:11.6px;line-height:13.43px;letter-spacing:-0.261px">387</div>
<div class="ln" style="left:480.20000000000005px;top:316.04px;font-size:11.6px;line-height:13.43px;letter-spacing:-0.261px">388</div>
<div class="cl" style="left:522.9px;top:316.84px;font-size:10.6px;line-height:13.43px;letter-spacing:0.339px">  const map = {};</div>
<div class="ln" style="left:480.20000000000005px;top:329.47px;font-size:11.6px;line-height:13.43px;letter-spacing:-0.261px">389</div>
<div class="cl" style="left:522.9px;top:330.27px;font-size:10.6px;line-height:13.43px;letter-spacing:0.339px">  for (let i = 0; i &lt; values.length; i++){</div>
<div class="ln" style="left:480.20000000000005px;top:342.90px;font-size:11.6px;line-height:13.43px;letter-spacing:-0.261px">390</div>
<div class="cl" style="left:522.9px;top:343.70px;font-size:10.6px;line-height:13.43px;letter-spacing:0.339px">    const name = String(values[i][0]).trim();</div>
<div class="ln" style="left:480.20000000000005px;top:356.33px;font-size:11.6px;line-height:13.43px;letter-spacing:-0.261px">391</div>
<div class="cl" style="left:522.9px;top:357.13px;font-size:10.6px;line-height:13.43px;letter-spacing:0.339px">    const qty  = Number(values[i][1]) || 0;</div>
<div class="ln" style="left:480.20000000000005px;top:369.76px;font-size:11.6px;line-height:13.43px;letter-spacing:-0.261px">392</div>
<div class="cl" style="left:522.9px;top:370.56px;font-size:10.6px;line-height:13.43px;letter-spacing:0.339px">    if (name) map[name] = qty;</div>
<div class="ln" style="left:480.20000000000005px;top:383.19px;font-size:11.6px;line-height:13.43px;letter-spacing:-0.261px">393</div>
<div class="cl" style="left:522.9px;top:383.99px;font-size:10.6px;line-height:13.43px;letter-spacing:0.339px">  }</div>
<div class="ln" style="left:480.20000000000005px;top:396.62px;font-size:11.6px;line-height:13.43px;letter-spacing:-0.261px">394</div>
<div class="cl" style="left:522.9px;top:397.42px;font-size:10.6px;line-height:13.43px;letter-spacing:0.339px">  return map;</div>
<div class="ln" style="left:480.20000000000005px;top:410.05px;font-size:11.6px;line-height:13.43px;letter-spacing:-0.261px">395</div>
<div class="cl" style="left:522.9px;top:410.85px;font-size:10.6px;line-height:13.43px;letter-spacing:0.339px">}</div>
<div class="ln" style="left:480.20000000000005px;top:423.48px;font-size:11.6px;line-height:13.43px;letter-spacing:-0.261px">396</div>
<div class="ln" style="left:480.20000000000005px;top:436.91px;font-size:11.6px;line-height:13.43px;letter-spacing:-0.261px">397</div>
<div class="cl" style="left:522.9px;top:437.71px;font-size:10.6px;line-height:13.43px;letter-spacing:0.339px">function useStorageFlag(){</div>
<div class="ln" style="left:480.20000000000005px;top:450.34px;font-size:11.6px;line-height:13.43px;letter-spacing:-0.261px">398</div>
<div class="cl" style="left:522.9px;top:451.14px;font-size:10.6px;line-height:13.43px;letter-spacing:0.339px">  const ss = SpreadsheetApp.getActive();</div>
<div class="ln" style="left:480.20000000000005px;top:463.77px;font-size:11.6px;line-height:13.43px;letter-spacing:-0.261px">399</div>
<div class="cl" style="left:522.9px;top:464.57px;font-size:10.6px;line-height:13.43px;letter-spacing:0.339px">  const craft = ss.getSheetByName('Craft');</div>
<div class="ln" style="left:480.20000000000005px;top:477.20px;font-size:11.6px;line-height:13.43px;letter-spacing:-0.261px">400</div>
<div class="cl" style="left:522.9px;top:478.00px;font-size:10.6px;line-height:13.43px;letter-spacing:0.339px">  const flag = craft.getRange('E2').getValue();</div>
<div class="ln" style="left:480.20000000000005px;top:490.63px;font-size:11.6px;line-height:13.43px;letter-spacing:-0.261px">401</div>
<div class="cl" style="left:522.9px;top:491.43px;font-size:10.6px;line-height:13.43px;letter-spacing:0.339px">  return flag === true;</div>
<div class="ln" style="left:480.20000000000005px;top:504.06px;font-size:11.6px;line-height:13.43px;letter-spacing:-0.261px">402</div>
<div class="cl" style="left:522.9px;top:504.86px;font-size:10.6px;line-height:13.43px;letter-spacing:0.339px">}</div>
<div class="ln" style="left:480.20000000000005px;top:517.49px;font-size:11.6px;line-height:13.43px;letter-spacing:-0.261px">403</div>
<div class="cl" style="left:522.9px;top:518.29px;font-size:10.6px;line-height:13.43px;letter-spacing:0.339px">1224214124</div>
<div class="a" style="left:995.4px;top:102.0px;width:5px;height:457.0px;background:#f0f0f0"></div>
<div class="a" style="left:995.4px;top:495.8px;width:5px;height:35.7px;background:#cdcdcd"></div>
<svg style="left:998.4px;top:108.6px" width="5" height="3" viewBox="0 0 10 6"><path d="M0 6L5 0L10 6" fill="none" stroke="#505050" stroke-width="2"/></svg>
<div class="a" style="left:590.30px;top:517.4px;width:1.2px;height:13.2px;background:#8f45f2"></div>
<div class="a" style="left:473px;top:27px;width:1px;height:532px;background:#5f9bd5"></div>
<div class="a" style="left:473px;top:0;width:1px;height:27px;background:#cfd4d8"></div>
<div class="a" style="left:474px;top:27px;width:1px;height:532px;background:#c6def6"></div>
<div class="a" style="left:475px;top:27px;width:1px;height:532px;background:#f0f0f0"></div>
<div class="a" style="left:475px;top:102.0px;width:1px;height:457.0px;background:#e6e6e6"></div>
<div class="a" style="left:457px;top:0;width:16px;height:559px;background:linear-gradient(90deg,rgba(0,0,0,0),rgba(0,0,0,.03) 45%,rgba(0,0,0,.075) 80%,rgba(0,0,0,.13))"></div>
</div>
</body></html>
